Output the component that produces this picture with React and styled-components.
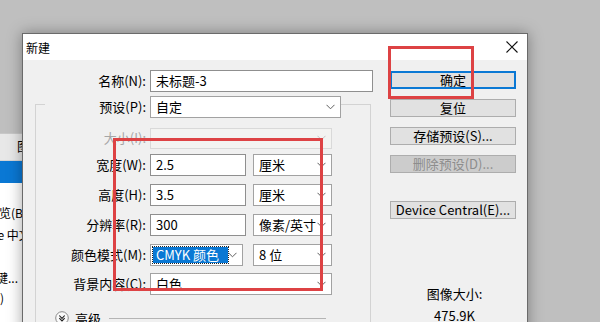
import React from 'react';
import styled, { createGlobalStyle } from 'styled-components';

const GlobalStyle = createGlobalStyle`
  html, body {
    margin: 0;
    padding: 0;
    width: 600px;
    height: 322px;
    overflow: hidden;
    background: #bfbfbf;
    font-family: "Noto Sans CJK SC", "Noto Sans", sans-serif;
    font-size: 13px;
    color: #000;
  }
`;

const Desktop = styled.div`
  position: relative;
  width: 600px;
  height: 322px;
  overflow: hidden;
  background: #bfbfbf;
`;

// window behind the dialog, mostly hidden
const BackWindow = styled.div`
  position: absolute;
  left: -80px;
  top: 133px;
  width: 102px;
  height: 220px;
  background: #fff;
  border-top: 1px solid #c8c8c8;
`;

const BackHeader = styled.div`
  height: 26px;
  background: #e8e8e8;
  border-bottom: 1px solid #d4d4d4;
  line-height: 24px;
  padding-left: 97px;
  white-space: nowrap;
`;

const BackSelected = styled.div`
  height: 22px;
  background: #0a78d4;
`;

const BackItem = styled.div`
  height: ${(p) => p.$h}px;
  line-height: ${(p) => p.$h}px;
  padding-left: ${(p) => p.$pad}px;
  white-space: nowrap;
  font-size: 12px;
`;

const Dialog = styled.div`
  position: absolute;
  left: 22px;
  top: 33px;
  width: 504px;
  height: 320px;
  background: #f0f0f0;
  border: 1px solid #6a6a6a;
  box-shadow: 0 0 14px rgba(0, 0, 0, 0.35);
  z-index: 2;
`;

const TitleBar = styled.div`
  height: 26px;
  background: #fff;
  display: flex;
  align-items: center;
  justify-content: space-between;
  padding: 0 9px 0 3px;
  font-size: 12px;
`;

const Body = styled.div`
  display: flex;
  padding-top: 10px;
`;

const FormCol = styled.div`
  width: 357px;
  display: flex;
  flex-direction: column;
`;

const Row = styled.div`
  display: grid;
  grid-template-columns: ${(p) => p.$label}px auto;
  align-items: center;
  height: ${(p) => p.$h || 22}px;
  margin-top: ${(p) => p.$mt || 0}px;
`;

const Label = styled.div`
  text-align: right;
  padding-right: 4px;
  line-height: 22px;
  white-space: nowrap;
  color: ${(p) => (p.$disabled ? '#a6a6a6' : '#000')};
  background: ${(p) => (p.$legend ? '#f0f0f0' : 'transparent')};
  margin-left: ${(p) => (p.$legend ? 9 : 0)}px;
`;

const Fields = styled.div`
  display: flex;
  gap: ${(p) => p.$gap || 7}px;
`;

const TextInput = styled.div`
  width: ${(p) => p.$w}px;
  height: 22px;
  box-sizing: border-box;
  border: 1px solid #8f8f8f;
  background: #fff;
  padding-left: 5px;
  line-height: 20px;
  white-space: nowrap;
`;

const SelectBox = styled.div`
  width: ${(p) => p.$w}px;
  height: ${(p) => p.$h || 22}px;
  box-sizing: border-box;
  border: 1px solid ${(p) => (p.$disabled ? '#d9d9d9' : '#a2a2a2')};
  background: ${(p) => (p.$disabled ? '#f3f3f1' : '#fff')};
  display: flex;
  align-items: center;
  justify-content: space-between;
  padding: 0 5px 0 ${(p) => (p.$focus ? 2 : 5)}px;
  line-height: 20px;
  white-space: nowrap;
`;

const Highlight = styled.span`
  background: #0a78d4;
  color: #fff;
  outline: 1px dotted #222;
  padding: 0 3px 0 3px;
  width: 69px;
  height: 16px;
  line-height: 16px;
  display: inline-block;
`;

const GroupBox = styled.div`
  margin: 12px 0 0 12px;
  width: 336px;
  height: 260px;
  box-sizing: border-box;
  border: 1px solid #d3d3d3;
  border-bottom: none;
  display: flex;
  flex-direction: column;
`;

const Advanced = styled.div`
  display: flex;
  align-items: center;
  gap: 6px;
  margin: 15px 0 0 19px;
  height: 16px;
`;

const Rule = styled.div`
  width: 217px;
  height: 1px;
  background: #b4b4b4;
  margin-left: 2px;
`;

const ButtonCol = styled.div`
  width: 126px;
  margin-left: 10px;
  padding-top: 1px;
  display: flex;
  flex-direction: column;
`;

const Button = styled.div`
  height: 18px;
  box-sizing: border-box;
  border: ${(p) => (p.$primary ? '2px solid #0a78d4' : '1px solid #adadad')};
  background: ${(p) => (p.$disabled ? '#cccccc' : '#e1e1e1')};
  color: ${(p) => (p.$disabled ? '#8d8d8d' : '#000')};
  text-align: center;
  line-height: ${(p) => (p.$primary ? 14 : 16)}px;
  margin-top: ${(p) => p.$mt || 0}px;
  white-space: nowrap;
`;

const SizeInfo = styled.div`
  margin-top: ${(p) => p.$mt}px;
  text-align: center;
  line-height: 16px;
  padding-left: 3px;
`;

const Mark = styled.div`
  position: absolute;
  left: ${(p) => p.$x}px;
  top: ${(p) => p.$y}px;
  width: ${(p) => p.$w}px;
  height: ${(p) => p.$h}px;
  box-sizing: border-box;
  border: 3px solid #dd4244;
  z-index: 5;
`;

const Chevron = ({ color = '#606060' }) => (
  <svg width="9" height="6" viewBox="0 0 9 6">
    <polyline points="0.5,0.8 4.5,4.8 8.5,0.8" fill="none" stroke={color} strokeWidth="1" />
  </svg>
);

const CloseIcon = () => (
  <svg width="12" height="12" viewBox="0 0 12 12">
    <path d="M0.5 0.5 L11.5 11.5 M11.5 0.5 L0.5 11.5" stroke="#111" strokeWidth="1.1" />
  </svg>
);

const ExpandIcon = () => (
  <svg width="14" height="14" viewBox="0 0 14 14">
    <circle cx="7" cy="7" r="6.3" fill="#fafafa" stroke="#8a8a8a" strokeWidth="1" />
    <path d="M4.3 4.5 L7 7.4 L9.7 4.5 M4.3 7.2 L7 10 L9.7 7.2" fill="none" stroke="#222" strokeWidth="1.1" />
  </svg>
);

const Select = ({ w, h, value, disabled, focus, chevronColor }) => (
  <SelectBox $w={w} $h={h} $disabled={disabled} $focus={focus}>
    <span>{value}</span>
    <Chevron color={disabled ? '#c4c4c4' : chevronColor} />
  </SelectBox>
);

export default function App() {
  return (
    <Desktop>
      <GlobalStyle />
      <BackWindow>
        <BackHeader>图层</BackHeader>
        <BackSelected />
        <BackItem $h={19} $pad={0} />
        <BackItem $h={22} $pad={67}>预览(B)</BackItem>
        <BackItem $h={22} $pad={48}>Adobe 中文</BackItem>
        <BackItem $h={22} $pad={0} />
        <BackItem $h={20} $pad={76}>键...</BackItem>
        <BackItem $h={20} $pad={76}>()</BackItem>
      </BackWindow>

      <Dialog>
        <TitleBar>
          <span>新建</span>
          <CloseIcon />
        </TitleBar>
        <Body>
          <FormCol>
            <Row $label={127}>
              <Label>名称(N):</Label>
              <TextInput $w={223}>未标题-3</TextInput>
            </Row>
            <GroupBox>
              <Row $label={114} $mt={-9}>
                <Label $legend>预设(P):</Label>
                <Select w={191} value="自定" />
              </Row>
              <Row $label={114} $mt={9} $h={21}>
                <Label $disabled>大小(I):</Label>
                <Select w={182} h={21} value="" disabled />
              </Row>
              <Row $label={114} $mt={6}>
                <Label>宽度(W):</Label>
                <Fields>
                  <TextInput $w={96}>2.5</TextInput>
                  <Select w={79} value="厘米" />
                </Fields>
              </Row>
              <Row $label={114} $mt={8}>
                <Label>高度(H):</Label>
                <Fields>
                  <TextInput $w={96}>3.5</TextInput>
                  <Select w={79} value="厘米" />
                </Fields>
              </Row>
              <Row $label={114} $mt={8}>
                <Label>分辨率(R):</Label>
                <Fields>
                  <TextInput $w={96}>300</TextInput>
                  <Select w={79} value="像素/英寸" />
                </Fields>
              </Row>
              <Row $label={114} $mt={8}>
                <Label>颜色模式(M):</Label>
                <Fields $gap={10}>
                  <Select w={93} value={<Highlight>CMYK 颜色</Highlight>} focus />
                  <Select w={79} value="8 位" />
                </Fields>
              </Row>
              <Row $label={114} $mt={7}>
                <Label>背景内容(C):</Label>
                <Select w={182} value="白色" />
              </Row>
              <Advanced>
                <ExpandIcon />
                <span>高级</span>
                <Rule />
              </Advanced>
            </GroupBox>
          </FormCol>

          <ButtonCol>
            <Button $primary>确定</Button>
            <Button $mt={10}>复位</Button>
            <Button $mt={10}>存储预设(S)...</Button>
            <Button $mt={10} $disabled>删除预设(D)...</Button>
            <Button $mt={28}>Device Central(E)...</Button>
            <SizeInfo $mt={67}>图像大小:</SizeInfo>
            <SizeInfo $mt={6}>475.9K</SizeInfo>
          </ButtonCol>
        </Body>
      </Dialog>

      <Mark $x={388} $y={46} $w={86} $h={53} />
      <Mark $x={113} $y={138} $w={210} $h={153} />
    </Desktop>
  );
}
